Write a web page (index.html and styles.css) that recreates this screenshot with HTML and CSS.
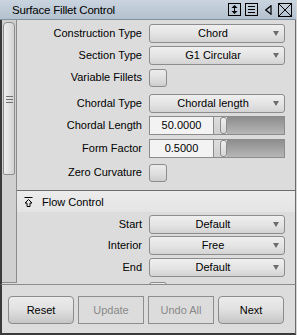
FILE: index.html
```html
<!DOCTYPE html>
<html>
<head>
<meta charset="utf-8">
<link rel="stylesheet" href="styles.css">
</head>
<body>
<div class="win">
  <div class="title">
    <span class="title-text">Surface Fillet Control</span>
    <div class="title-icons">
      <svg class="ic ic-size" width="13" height="13" viewBox="0 0 13 13">
        <rect x="0.5" y="0.5" width="12" height="12" fill="none" stroke="#000"/>
        <line x1="6.5" y1="4" x2="6.5" y2="9" stroke="#000"/>
        <polygon points="6.5,2 3.5,5 9.5,5" fill="#000"/>
        <polygon points="6.5,11 3.5,8 9.5,8" fill="#000"/>
      </svg>
      <svg class="ic ic-menu" width="13" height="13" viewBox="0 0 13 13">
        <rect x="0.5" y="0.5" width="12" height="12" fill="none" stroke="#000"/>
        <line x1="3" y1="3.5" x2="10" y2="3.5" stroke="#000"/>
        <line x1="3" y1="6.5" x2="10" y2="6.5" stroke="#000"/>
        <line x1="3" y1="9.5" x2="10" y2="9.5" stroke="#000"/>
      </svg>
      <svg class="ic ic-tri" width="7" height="10" viewBox="0 0 7 10">
        <polygon points="6,0.8 0.8,5 6,9.2" fill="none" stroke="#000" stroke-width="1.2"/>
      </svg>
      <svg class="ic ic-close" width="14" height="14" viewBox="0 0 14 14">
        <rect x="0.5" y="0.5" width="13" height="13" fill="none" stroke="#000"/>
        <line x1="1" y1="1" x2="13" y2="13" stroke="#000"/>
        <line x1="13" y1="1" x2="1" y2="13" stroke="#000"/>
      </svg>
    </div>
  </div>
  <div class="main">
    <div class="scroll">
      <div class="thumb"><div class="grip"></div></div>
    </div>
    <div class="panel">
      <div class="form form-top">
        <div class="row"><span class="lbl">Construction Type</span><div class="dd">Chord</div></div>
        <div class="row m3"><span class="lbl">Section Type</span><div class="dd">G1 Circular</div></div>
        <div class="row m3"><span class="lbl">Variable Fillets</span><div class="cbw"><div class="cb"></div></div></div>
        <div class="row m7"><span class="lbl">Chordal Type</span><div class="dd">Chordal length</div></div>
        <div class="row m3"><span class="lbl">Chordal Length</span>
          <div class="fs"><div class="fld">50.0000</div><div class="sl"><div class="sl-fill"></div><div class="sl-handle"></div><div class="sl-track"></div></div></div>
        </div>
        <div class="row m4"><span class="lbl">Form Factor</span>
          <div class="fs"><div class="fld">0.5000</div><div class="sl"><div class="sl-fill"></div><div class="sl-handle"></div><div class="sl-track"></div></div></div>
        </div>
        <div class="row m5"><span class="lbl">Zero Curvature</span><div class="cbw"><div class="cb"></div></div></div>
      </div>
      <div class="sep"></div>
      <div class="section">
        <svg class="sec-ic" width="9" height="10" viewBox="0 0 9 10">
          <line x1="0.5" y1="0.5" x2="8.5" y2="0.5" stroke="#000"/>
          <path d="M4.5 2.5 L8 6 H6 V9.5 H3 V6 H1 Z" fill="none" stroke="#000"/>
        </svg>
        <span>Flow Control</span>
      </div>
      <div class="form form-flow">
        <div class="row"><span class="lbl">Start</span><div class="dd">Default</div></div>
        <div class="row m2"><span class="lbl">Interior</span><div class="dd">Free</div></div>
        <div class="row m3"><span class="lbl">End</span><div class="dd">Default</div></div>
        <div class="row m4"><span class="lbl"></span><div class="cbw"><div class="cb"></div></div></div>
      </div>
    </div>
  </div>
  <div class="footer">
    <div class="btn">Reset</div>
    <div class="btn dis">Update</div>
    <div class="btn dis">Undo All</div>
    <div class="btn">Next</div>
  </div>
</div>
</body>
</html>
```
FILE: styles.css
```css
* { box-sizing: border-box; }
html, body { margin: 0; padding: 0; }
body {
  width: 297px;
  height: 335px;
  background: #d6d6d6;
  font-family: "Liberation Sans", Arial, sans-serif;
  font-size: 11px;
  color: #000;
  overflow: hidden;
}
.win {
  width: 296px;
  height: 335px;
  display: flex;
  flex-direction: column;
  background: #dcdcdc;
}
.title {
  height: 20px;
  flex: none;
  display: flex;
  align-items: center;
  justify-content: space-between;
  background: linear-gradient(#c9d4df, #b3c1ce);
  border-bottom: 1px solid #8593a1;
  padding-left: 12px;
  padding-right: 4px;
}
.title-text { font-size: 11.5px; letter-spacing: -0.2px; }
.title-icons { display: flex; align-items: center; height: 100%; }
.ic { display: block; }
.ic-size { margin-right: 4px; }
.ic-menu { margin-right: 7px; }
.ic-tri { margin-right: 6px; }
.main {
  height: 264px;
  flex: none;
  display: flex;
  border-left: 2px solid #3a3a3a;
  border-right: 1px solid #6c6c6c;
  overflow: hidden;
}
.scroll {
  width: 15px;
  flex: none;
  background: #d0d0d0;
  border-right: 1px solid #8c8c8c;
  border-bottom: 1px solid #8c8c8c;
  height: 263px;
  padding: 2px 0 0 1px;
}
.thumb {
  width: 12px;
  height: 153px;
  border: 1px solid #8e8e8e;
  border-radius: 4px 4px 2px 2px;
  background: linear-gradient(90deg, #ececec 0, #e4e4e4 40%, #d2d2d2 100%);
  display: flex;
  justify-content: center;
  padding-top: 73px;
}
.grip {
  width: 7px;
  height: 7px;
  border-top: 1px solid #707070;
  border-bottom: 1px solid #707070;
  position: relative;
}
.grip::after {
  content: "";
  display: block;
  height: 1px;
  margin-top: 2px;
  background: #707070;
}
.panel {
  flex: 1;
  display: flex;
  flex-direction: column;
}
.form { display: flex; flex-direction: column; }
.form-top { padding-top: 4px; }
.form-flow { padding-top: 3px; }
.row {
  display: grid;
  grid-template-columns: 125px 136px;
  column-gap: 7px;
  align-items: center;
  height: 19px;
}
.m2 { margin-top: 2px; }
.m3 { margin-top: 3px; }
.m4 { margin-top: 4px; }
.m5 { margin-top: 5px; }
.m7 { margin-top: 7px; }
.lbl { text-align: right; white-space: nowrap; line-height: 19px; }
.dd {
  height: 19px;
  border: 1px solid #8c8c8c;
  border-radius: 3px;
  background: linear-gradient(#efefef 0%, #e3e3e3 55%, #d3d3d3 100%);
  text-align: center;
  line-height: 17px;
  padding-right: 8px;
  position: relative;
}
.dd::after {
  content: "";
  position: absolute;
  right: 5px;
  top: 6px;
  border-left: 3.5px solid transparent;
  border-right: 3.5px solid transparent;
  border-top: 5px solid #6c6c6c;
}
.cbw { display: flex; }
.cb {
  width: 18px;
  height: 18px;
  border: 1px solid #8c8c8c;
  border-radius: 3px;
  background: linear-gradient(#ececec 0%, #e0e0e0 50%, #cdcdcd 100%);
}
.fs { display: flex; height: 19px; }
.fld {
  width: 65px;
  height: 19px;
  border: 1px solid #8c8c8c;
  background: #f3f3f3;
  text-align: center;
  line-height: 17px;
}
.sl {
  flex: 1;
  display: flex;
  border: 1px solid #8c8c8c;
  border-left: none;
  background: #d8d8d8;
}
.sl-fill {
  width: 6px;
  background: linear-gradient(#dedede, #cfcfcf);
}
.sl-handle {
  width: 7px;
  border: 1px solid #8c8c8c;
  border-radius: 3px;
  background: linear-gradient(#efefef, #d6d6d6);
}
.sl-track {
  flex: 1;
  background: linear-gradient(#8d8d8d, #b6b6b6);
}
.sep {
  height: 1px;
  background: #6e6e6e;
  margin-top: 8px;
  flex: none;
}
.section {
  height: 21px;
  flex: none;
  display: flex;
  align-items: center;
  background: linear-gradient(#ececec, #e4e4e4);
  padding-left: 7px;
}
.sec-ic { margin-right: 9px; display: block; }
.footer {
  flex: 1;
  display: flex;
  gap: 4px;
  border-top: 1px solid #8c8c8c;
  border-left: 2px solid #3a3a3a;
  border-right: 1px solid #6c6c6c;
  border-bottom: 2px solid #3a3a3a;
  padding: 11px 0 0 6px;
}
.btn {
  width: 66px;
  height: 28px;
  border: 1px solid #8c8c8c;
  border-radius: 4px;
  background: linear-gradient(#ebebeb 0%, #e2e2e2 45%, #c6c6c6 100%);
  text-align: center;
  line-height: 26px;
}
.btn.dis {
  border-radius: 0;
  border-color: #8e8e8e;
  background: #dcdcdc;
  color: #8a8a8a;
}
```
